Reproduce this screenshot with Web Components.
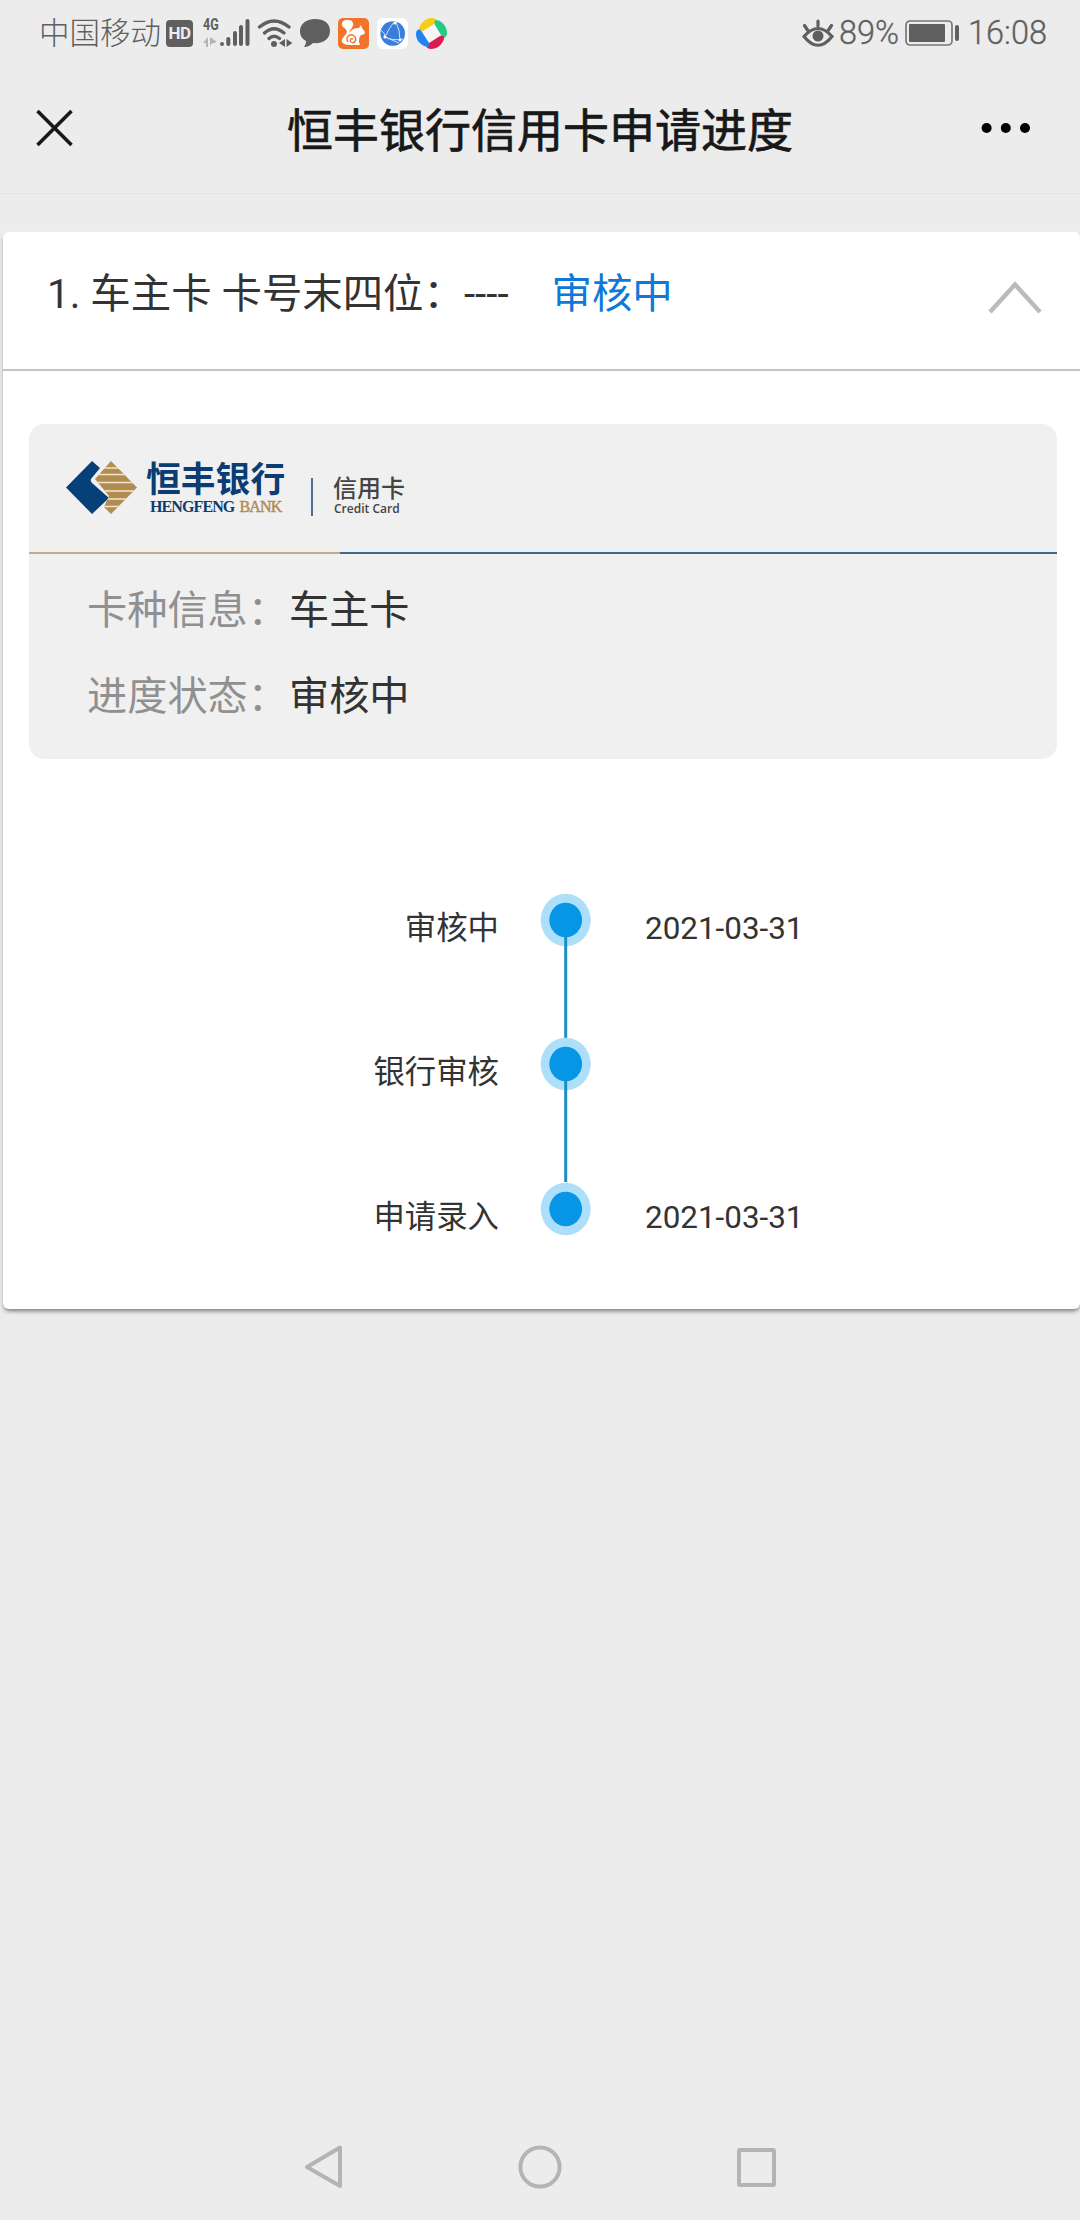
<!DOCTYPE html>
<html lang="zh-CN">
<head>
<meta charset="utf-8">
<title>恒丰银行信用卡申请进度</title>
<style>
html, body {
  margin: 0;
  background: #ececec;
}
body {
  width: 1080px;
  height: 2220px;
  overflow: hidden;
  display: flex;
  flex-direction: column;
  font-family: Roboto, "Noto Sans CJK SC", sans-serif;
  color: #333;
}
main {
  flex: 1;
  padding: 38px 0 0 3px;
}
</style>
</head>
<body>
<status-bar carrier="中国移动" battery="89%" time="16:08"></status-bar>
<title-bar>恒丰银行信用卡申请进度</title-bar>
<main>
  <progress-card>
    <span slot="title">1. 车主卡 卡号末四位：----</span>
    <span slot="status">审核中</span>
    <card-info>
      <bank-logo slot="logo"></bank-logo>
      <info-row label="卡种信息：">车主卡</info-row>
      <info-row label="进度状态：">审核中</info-row>
    </card-info>
    <time-line>
      <time-step date="2021-03-31">审核中</time-step>
      <time-step>银行审核</time-step>
      <time-step date="2021-03-31" last>申请录入</time-step>
    </time-line>
  </progress-card>
</main>
<nav-bar></nav-bar>

<script>
/**
 * Attaches an open shadow root holding the given markup.
 */
function render (element, html) {
  const template = document.createElement('template')
  template.innerHTML = html
  element.attachShadow({ mode: 'open' })
    .appendChild(template.content.cloneNode(true))
}

customElements.define('status-bar',
  /**
   * Represents the phone's status bar.
   */
  class extends HTMLElement {
    constructor () {
      super()
      render(this, `
<style>
:host {
  display: flex;
  box-sizing: border-box;
  height: 66px;
  padding: 0 31px 0 39px;
  align-items: center;
  justify-content: space-between;
  color: #5f5f5f;
  line-height: 1;
}
div {
  display: flex;
  align-items: center;
}
svg {
  display: block;
  flex: none;
}
.carrier {
  width: 127px;
  padding-top: 2px;
  font-size: 30.500px;
  font-weight: 300;
  white-space: nowrap;
}
.hd {
  width: 27px;
  height: 27px;
  border-radius: 4px;
  background: #5f5f5f;
  color: #ececec;
  font: bold 17px/27px Roboto, sans-serif;
  text-align: center;
  letter-spacing: -0.5px;
}
.net {
  width: 17px;
  height: 30px;
  margin-left: 10px;
  display: block;
}
.net span {
  display: block;
  font: bold 16px/14px Roboto, sans-serif;
  transform: scaleX(0.78);
  transform-origin: left;
}
.net svg {
  margin-top: 5px;
}
.battery, .time {
  padding-top: 1px;
  font-size: 32.500px;
  font-weight: 300;
  -webkit-text-stroke: 0.3px #5f5f5f;
  white-space: nowrap;
}
.battery {
  width: 66px;
  margin-left: 5px;
}
.time {
  width: 81px;
  margin-left: 9px;
}
</style>
<div>
  <span class="carrier"></span>
  <span class="hd">HD</span>
  <span class="net">
    <span>4G</span>
    <svg width="14" height="11"><path d="M5 0v10H3V6H0zM7 0v10l1-3 6-2z" fill="#b4b4b4"/></svg>
  </span>
  <svg width="30" height="30" viewBox="0 0 30 30" stroke="#5f5f5f" stroke-width="4" stroke-linecap="round">
    <path d="M2 26v.1M8.300 21v5M15 15v11M21 9v17M27.500 3v23"/>
  </svg>
  <svg style="margin-left:7px" width="36" height="30" viewBox="0 0 36 30" fill="none" stroke="#5f5f5f" stroke-width="3.300" stroke-linecap="round">
    <path d="M2.500 9Q17 -3 32 9M7.500 15Q17 6.500 27 15M12 20.500Q17 16 22.500 20.500"/>
    <circle cx="17" cy="26" r="3" fill="#5f5f5f" stroke="none"/>
    <path d="M28 21v8l-6-4zM29.500 21v8l6-4z" fill="#5f5f5f" stroke="none"/>
  </svg>
  <svg style="margin-left:7px" width="30" height="30" viewBox="0 0 30 30">
    <path d="M15 1C6 1 0 6 0 13c0 5 2.500 8 6 10 0 3-1 4-2 6 4 0 7-2 9-4 10 1 17-4 17-12S24 1 15 1z" fill="#5f5f5f"/>
  </svg>
  <svg style="margin-left:8px" width="31" height="31" viewBox="0 0 31 31">
    <rect width="31" height="31" rx="5" fill="#f4732a"/>
    <path d="M11 2C5 1 2 6 5 9c3 2 5 4 3 7-2 3-5 5-4 8 1 2 4 3 7 3h11l-1-3c0-3 0-5 2-7 2 0 4-1 4-3l-3-4-1-3-2 3c-4 0-7 1-10 5 1-4 5-6 4-10-1-2-2-3-4-3z" fill="#fff"/>
    <path d="M10 24c-3-5 2-9 6-6 4 4 0 8-3 6-2-2 0-4 2-3" fill="none" stroke="#f4732a" stroke-width="1.400"/>
  </svg>
  <svg style="margin-left:8px" width="31" height="31" viewBox="0 0 31 31">
    <rect width="31" height="31" rx="6" fill="#fff"/>
    <circle cx="15.700" cy="15.500" r="12.300" fill="#3b7ddb"/>
    <path d="M17 4Q12 10 8 19Q15 23 26 21M19 4Q23 12 23 22M4 12Q8 15 8 19L22 25" fill="none" stroke="#cfe2fb" stroke-width="1"/>
    <circle cx="8" cy="19" r="1.600" fill="#fff"/><circle cx="18" cy="5" r="1.500" fill="#fff"/><circle cx="23" cy="22" r="1.500" fill="#fff"/>
  </svg>
  <svg style="margin-left:8px" width="31" height="31" viewBox="0 0 31 31">
    <circle cx="15.500" cy="15.500" r="12" fill="#f6f6f6"/>
    <path d="M3 11C5 4 10 0 16 0c5 0 6 4 2 6L7 13c-2 1-4 0-4-2z" fill="#f5cd15"/>
    <path d="M20 2c7 1 11 7 11 13 0 5-4 6-6 2l-6-10c-1-2-1-4 1-5z" fill="#22cc85"/>
    <path d="M28 21c-2 6-7 10-13 10-5 0-6-4-2-6l11-7c3-1 5 1 4 3z" fill="#dc1b53"/>
    <path d="M11 29C4 27 0 22 0 16c0-5 4-6 6-2l7 11c1 2 0 4-2 4z" fill="#2282f0"/>
  </svg>
</div>
<div>
  <svg width="32" height="29" viewBox="0 0 32 29" fill="none" stroke="#5f5f5f" stroke-width="3.200" stroke-linecap="round">
    <path d="M2 17.500Q16 1.500 30 17.500Q16 35 2 17.500zM16 7V2M5.500 11L2.500 6.500M26.500 11l3-4.500"/>
    <circle cx="16" cy="17" r="5.500" fill="#5f5f5f" stroke="none"/>
  </svg>
  <span class="battery"></span>
  <svg width="54" height="26" viewBox="0 0 54 26">
    <rect x="1" y="1" width="46" height="24" rx="4" fill="none" stroke="#777" stroke-width="1.700"/>
    <rect x="4" y="4" width="36" height="18" rx="1" fill="#5f5f5f"/>
    <rect x="50" y="5" width="4" height="16" rx="2" fill="#5f5f5f"/>
  </svg>
  <span class="time"></span>
</div>
`)
      this.shadowRoot.querySelector('.carrier').textContent = this.getAttribute('carrier')
      this.shadowRoot.querySelector('.battery').textContent = this.getAttribute('battery')
      this.shadowRoot.querySelector('.time').textContent = this.getAttribute('time')
    }
  }
)

customElements.define('title-bar',
  /**
   * Represents the title bar with its close and menu buttons.
   */
  class extends HTMLElement {
    constructor () {
      super()
      render(this, `
<style>
:host {
  display: flex;
  box-sizing: border-box;
  height: 128px;
  padding: 0 47px 3px 33px;
  align-items: center;
  justify-content: space-between;
  border-bottom: 1px solid #e3e3e3;
  color: #181818;
}
h1 {
  margin: 5px 0 0 14px;
  font-size: 46px;
  line-height: 60px;
  font-weight: 400;
  -webkit-text-stroke: 0.7px #181818;
}
svg {
  display: block;
}
</style>
<svg width="56" height="42" viewBox="-3 -2.500 56 42" stroke="#181818" stroke-width="3.600"><path d="M1.500 1.500l34 34M35.500 1.500l-34 34"/></svg>
<h1><slot></slot></h1>
<svg width="56" height="12" viewBox="0 0 56 12"><circle cx="9.600" cy="6" r="5"/><circle cx="28.800" cy="6" r="5"/><circle cx="48" cy="6" r="5"/></svg>
`)
    }
  }
)

customElements.define('progress-card',
  class extends HTMLElement {
    constructor () {
      super()
      render(this, `
<style>
:host {
  display: block;
  box-sizing: border-box;
  height: 1077px;
  border-radius: 6px;
  background: #fff;
  box-shadow: 0 3px 4px -1px rgba(0, 0, 0, 0.5), 0 0 3px #f6f6f6;
}
header {
  display: flex;
  box-sizing: border-box;
  height: 139px;
  padding: 0 38px 11px 44px;
  align-items: center;
  border-bottom: 2px solid #c4c4c4;
  font-size: 40.400px;
  line-height: 60px;
  white-space: pre;
}
.status {
  flex: 1;
  margin-left: 43px;
  color: #0f78d8;
}
svg {
  display: block;
  margin-top: 5px;
}
</style>
<header>
  <slot name="title"></slot>
  <span class="status"><slot name="status"></slot></span>
  <svg width="54" height="33" viewBox="0 0 54 33" fill="none" stroke="#bbb" stroke-width="4.500"><path d="M2 31L27 3.500L52 31"/></svg>
</header>
<slot></slot>
`)
    }
  }
)

customElements.define('card-info',
  /**
   * Represents the grey panel with the bank's logo and the card's data.
   */
  class extends HTMLElement {
    constructor () {
      super()
      render(this, `
<style>
:host {
  display: block;
  box-sizing: border-box;
  height: 335px;
  margin: 53px 23px 0 26px;
  border-radius: 15px;
  background: #f0f0f0;
}
.logo {
  display: flex;
  box-sizing: border-box;
  height: 128px;
  padding: 34px 0 0 36px;
}
.rule {
  height: 2px;
  background: linear-gradient(to right, #c3a988 311px, #426887 311px);
}
.rows {
  display: flex;
  flex-direction: column;
  gap: 26px;
  padding: 27px 0 0 58px;
}
</style>
<div class="logo"><slot name="logo"></slot></div>
<div class="rule"></div>
<div class="rows"><slot></slot></div>
`)
    }
  }
)

customElements.define('bank-logo',
  /**
   * Represents the logo of the bank's credit card.
   */
  class extends HTMLElement {
    constructor () {
      super()
      render(this, `
<style>
:host {
  display: flex;
  align-items: flex-start;
  color: #0b3d73;
  white-space: nowrap;
}
svg {
  display: block;
  margin-top: 2px;
}
.name {
  width: 140px;
  margin-left: 8px;
}
.cn {
  display: block;
  padding-top: 1px;
  font-size: 34.800px;
  font-weight: 700;
  line-height: 42px;
}
.en {
  display: block;
  margin: -2px 0 0 4px;
  font: bold 16px/16px "Liberation Serif", serif;
  letter-spacing: -0.9px;
  word-spacing: 2px;
}
.en b {
  color: #b08d57;
  font-weight: 400;
  letter-spacing: -0.8px;
  -webkit-text-stroke: 0.5px #b08d57;
}
.line {
  width: 2px;
  height: 38px;
  margin: 20px 0 0 25px;
  background: #4a6e90;
}
.card {
  margin: 16px 0 0 20px;
  color: #444;
}
.card span {
  display: block;
  font-size: 24px;
  font-weight: 500;
  line-height: 30px;
}
.card small {
  display: block;
  margin: -2px 0 0 1px;
  font: 600 12px/14px "Open Sans", sans-serif;
}
</style>
<svg width="73" height="56" viewBox="0 0 73 56">
  <defs><clipPath id="gold"><path d="M46 1L72 27.500L46 54L39 47L44 36L30 19z"/></clipPath></defs>
  <path d="M27 1L35 8L26 19Q25 21 27 23L44 38L27 54L1 27.500z" fill="#064078"/>
  <g clip-path="url(#gold)">
    <rect width="73" height="56" fill="#b38c50"/>
    <path d="M28 8h45M28 14.500h45M28 22.500h45M28 31h45M28 39h45M28 46.500h45" stroke="#f0e6d0" stroke-width="1.600"/>
  </g>
</svg>
<div class="name">
  <span class="cn">恒丰银行</span>
  <span class="en">HENGFENG <b>BANK</b></span>
</div>
<div class="line"></div>
<div class="card">
  <span>信用卡</span>
  <small>Credit Card</small>
</div>
`)
    }
  }
)

customElements.define('info-row',
  /**
   * Represents a labelled value.
   */
  class extends HTMLElement {
    constructor () {
      super()
      render(this, `
<style>
:host {
  display: flex;
  gap: 1px;
  font-size: 40.200px;
  line-height: 60px;
}
.label {
  color: #909090;
}
</style>
<span class="label"></span>
<span><slot></slot></span>
`)
      this.shadowRoot.querySelector('.label').textContent = this.getAttribute('label')
    }
  }
)

customElements.define('time-line',
  /**
   * Represents the list of steps.
   */
  class extends HTMLElement {
    constructor () {
      super()
      render(this, `
<style>
:host {
  display: flex;
  flex-direction: column;
  padding-top: 134px;
}
</style>
<slot></slot>
`)
    }
  }
)

customElements.define('time-step',
  /**
   * Represents one step: its name, its dot and its date.
   */
  class extends HTMLElement {
    constructor () {
      super()
      render(this, `
<style>
:host {
  display: grid;
  grid-template-columns: 496px 132px 1fr;
  height: 144.400px;
  font-size: 31.400px;
  line-height: 48px;
}
.name {
  padding-top: 12px;
  text-align: right;
}
.date {
  padding: 12px 0 0 14px;
}
svg {
  display: block;
  width: 132px;
  height: 145px;
}
:host([last]) .stem {
  display: none;
}
</style>
<span class="name"><slot></slot></span>
<svg viewBox="0 0 132 145">
  <ellipse cx="66.700" cy="27" rx="25" ry="26.300" fill="#addffa"/>
  <path class="stem" d="M66.700 27V145" stroke="#1a8fc0" stroke-width="3"/>
  <ellipse cx="66.700" cy="27" rx="16.400" ry="17.200" fill="#0795e6"/>
</svg>
<span class="date"></span>
`)
      this.shadowRoot.querySelector('.date').textContent = this.getAttribute('date')
    }
  }
)

customElements.define('nav-bar',
  /**
   * Represents the phone's back, home and recents buttons.
   */
  class extends HTMLElement {
    constructor () {
      super()
      render(this, `
<style>
:host {
  display: flex;
  height: 107px;
  padding: 0 304px 0 305px;
  align-items: center;
  justify-content: space-between;
}
svg {
  display: block;
  fill: none;
  stroke: #b4b4b4;
  stroke-width: 4;
  stroke-linejoin: round;
}
</style>
<svg width="38" height="44"><path d="M35 2.500V41L2 22z"/></svg>
<svg width="44" height="44"><circle cx="22" cy="22" r="19.600"/></svg>
<svg width="39" height="40"><rect x="2" y="3" width="35" height="35" rx="1"/></svg>
`)
    }
  }
)
</script>
</body>
</html>
